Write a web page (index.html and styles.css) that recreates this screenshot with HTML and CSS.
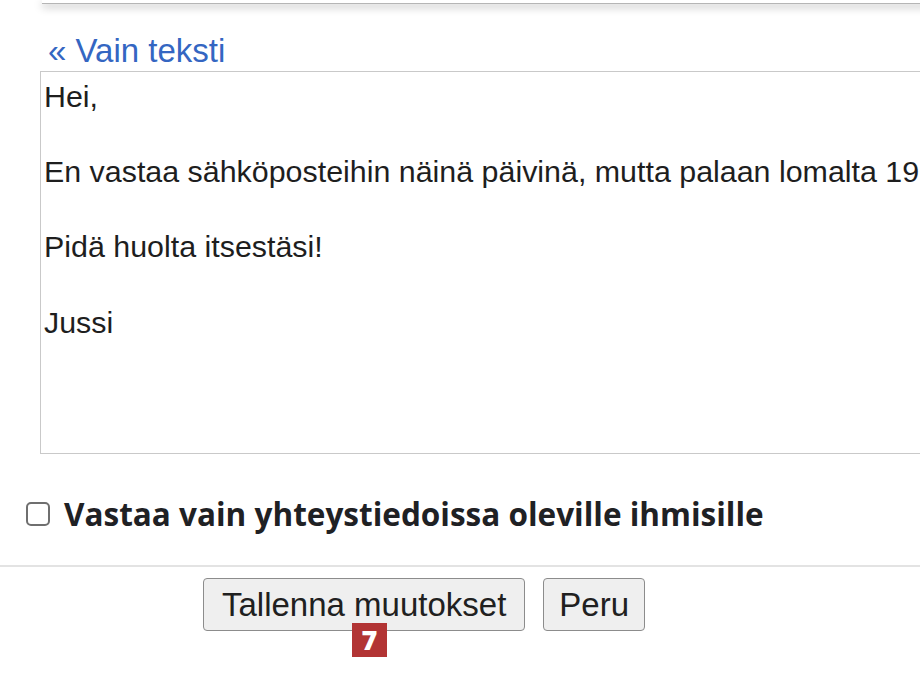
FILE: index.html
```html
<!DOCTYPE html>
<html lang="fi">
<head>
<meta charset="utf-8">
<title>Lomavastaaja</title>
<link rel="stylesheet" href="styles.css">
</head>
<body>
<div class="page">
  <div class="topcard"></div>
  <a class="plain-link" href="#">« Vain teksti</a>
  <textarea class="editor" readonly>Hei,

En vastaa sähköposteihin näinä päivinä, mutta palaan lomalta 19.8.

Pidä huolta itsestäsi!

Jussi</textarea>
  <label class="contacts">
    <span class="box"></span>
    <span class="contacts-text">Vastaa vain yhteystiedoissa oleville ihmisille</span>
  </label>
  <div class="divider"></div>
  <div class="actions">
    <button class="btn btn-save">Tallenna muutokset</button>
    <button class="btn btn-cancel">Peru</button>
    <span class="badge">7</span>
  </div>
</div>
</body>
</html>
```

FILE: styles.css
```css
html, body {
  margin: 0;
  padding: 0;
  background: #ffffff;
  overflow: hidden;
}
.page {
  width: 920px;
  height: 680px;
  overflow: hidden;
  font-family: "Liberation Sans", Arial, sans-serif;
  display: flex;
  flex-direction: column;
  align-items: flex-start;
}
.topcard {
  width: 900px;
  height: 3px;
  margin-left: 42px;
  background: #fff;
  border-bottom: 1px solid #b5b5b5;
  box-shadow: 0 3px 8px rgba(0,0,0,0.28);
  flex: none;
}
.plain-link {
  margin: 28px 0 0 48px;
  font-size: 33px;
  line-height: 38px;
  color: #3466c2;
  text-decoration: none;
}
.editor {
  box-sizing: border-box;
  width: 1000px;
  height: 383px;
  margin: 1px 0 0 40px;
  padding: 6px 3px;
  border: 1px solid #c9c9c9;
  font-family: "Liberation Sans", Arial, sans-serif;
  font-size: 30.4px;
  line-height: 37.6px;
  color: #1e1e1e;
  resize: none;
  overflow: hidden;
  white-space: pre;
  outline: none;
  flex: none;
}
.contacts {
  display: flex;
  align-items: center;
  margin: 42px 0 0 26px;
  gap: 14px;
}
.box {
  box-sizing: border-box;
  width: 24px;
  height: 24px;
  border: 2px solid #6f6f6f;
  border-radius: 5px;
  background: #fff;
  flex: none;
}
.contacts-text {
  font-family: "Open Sans", sans-serif;
  font-weight: 700;
  font-size: 31.5px;
  line-height: 36px;
  color: #1f2124;
}
.divider {
  width: 100%;
  height: 2px;
  background: #e3e3e3;
  margin-top: 33px;
  flex: none;
}
.actions {
  position: relative;
  display: flex;
  gap: 18px;
  margin: 11px 0 0 203px;
}
.btn {
  box-sizing: border-box;
  height: 53px;
  font-family: "Liberation Sans", Arial, sans-serif;
  font-size: 33px;
  color: #202020;
  background: #efefef;
  border: 1.5px solid #8c8c8c;
  border-radius: 4px;
}
.btn-save {
  padding: 0 18px;
}
.btn-cancel {
  padding: 0 15px;
}
.badge {
  position: absolute;
  left: 149px;
  top: 45px;
  width: 35px;
  height: 34px;
  background: #b23434;
  color: #fff;
  font-family: "Open Sans", sans-serif;
  font-weight: 800;
  font-size: 27px;
  line-height: 34px;
  text-align: center;
}
```
